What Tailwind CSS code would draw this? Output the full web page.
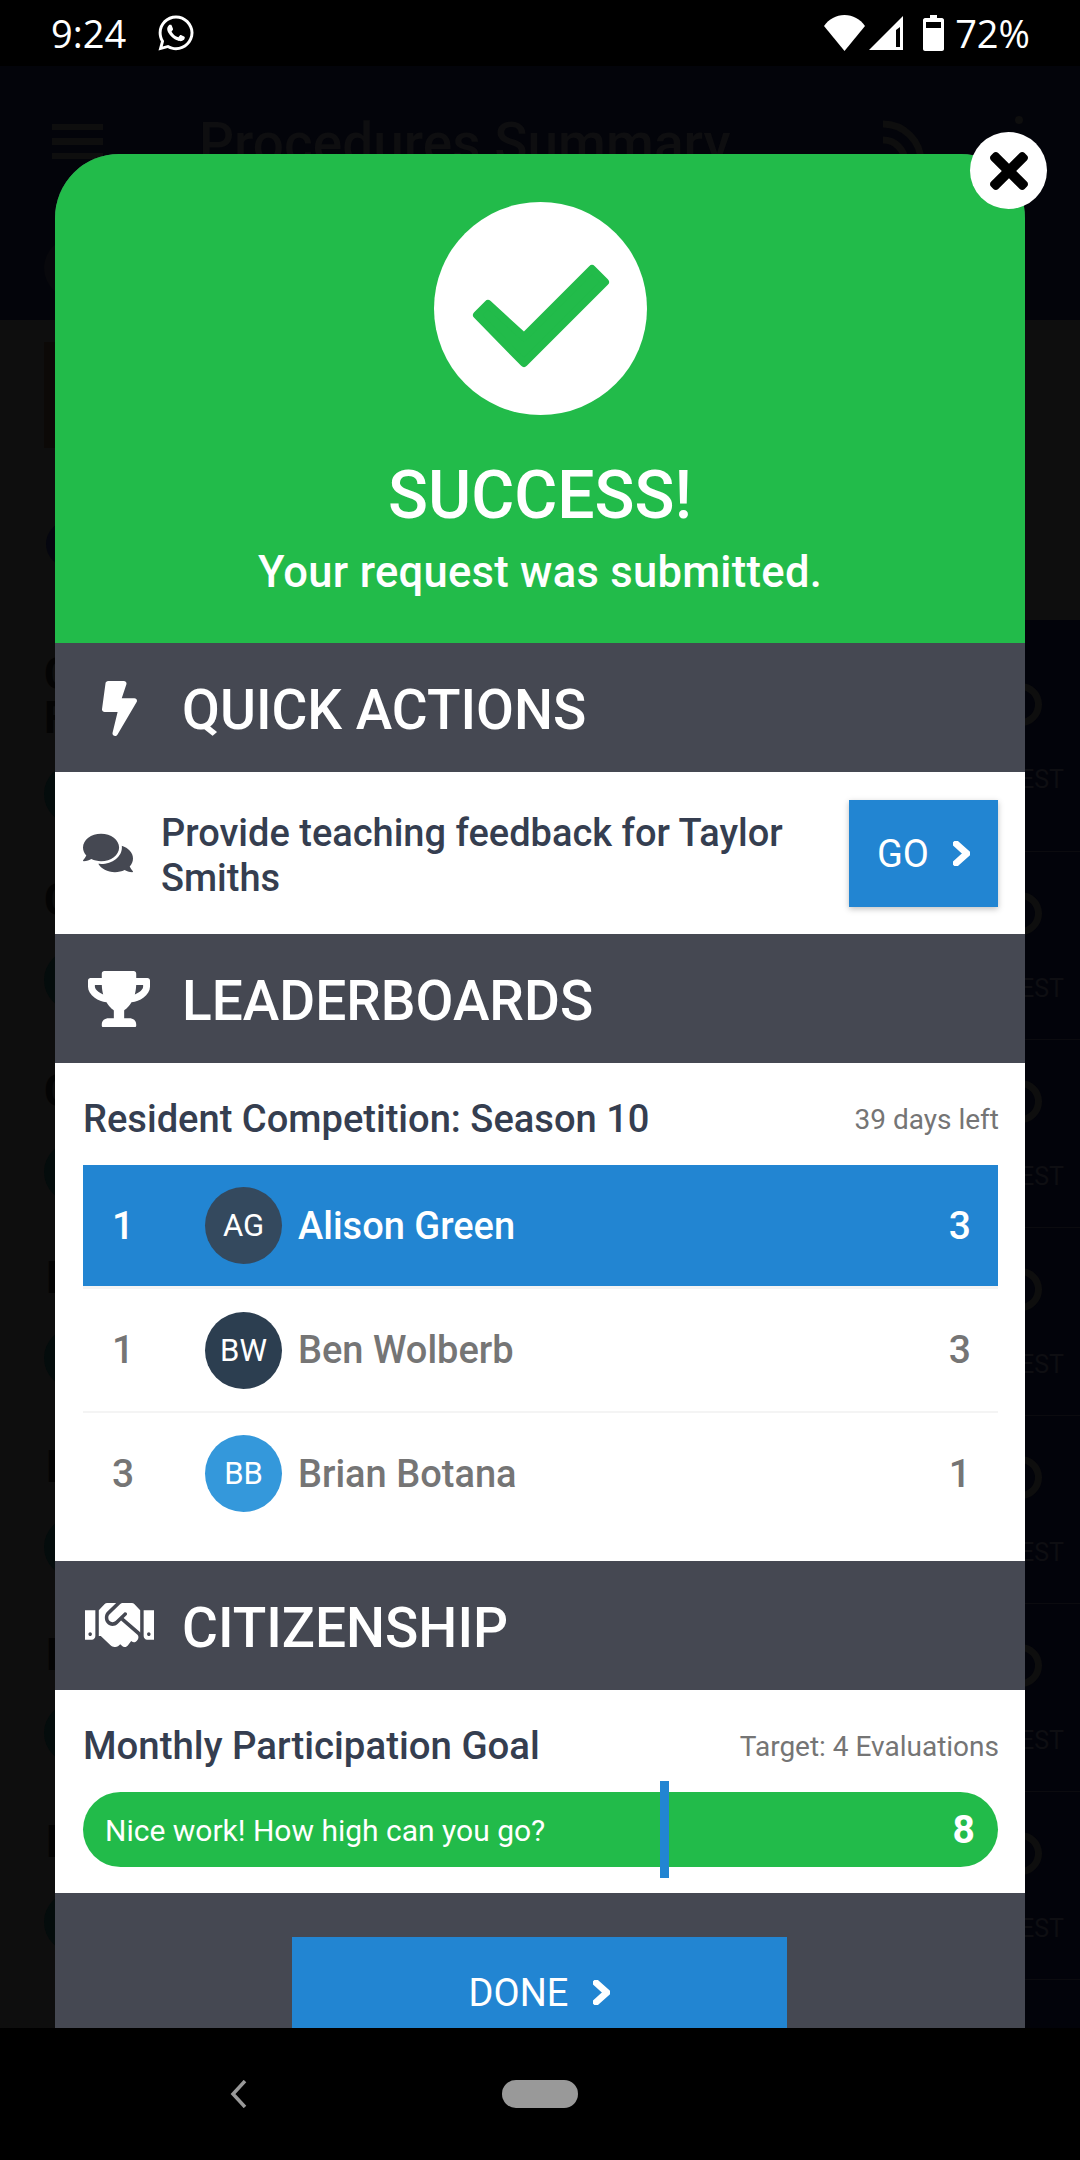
<!doctype html>
<html>
<head>
<meta charset="utf-8">
<script src="https://cdn.jsdelivr.net/npm/@tailwindcss/browser@4"></script>
</head>
<body class="bg-black">
<div class="w-[1080px] h-[2160px] flex flex-col bg-black font-['Roboto',sans-serif] overflow-hidden">

  <!-- status bar -->
  <div class="h-[66px] flex items-center pl-[51px] pr-[50px] text-white shrink-0">
    <span class="text-[38px] font-medium font-['Open_Sans',sans-serif] leading-none w-[106px]">9:24</span>
    <svg class="w-[38px] h-[40px]" viewBox="0 0 448 512" fill="currentColor"><path d="M380.9 97.1C339 55.1 283.2 32 223.9 32c-122.4 0-222 99.6-222 222 0 39.1 10.2 77.3 29.6 111L0 480l117.7-30.9c32.4 17.7 68.9 27 106.1 27h.1c122.3 0 224.1-99.6 224.1-222 0-59.3-25.2-115-67.1-157zm-157 341.6c-33.2 0-65.7-8.9-94-25.7l-6.7-4-69.8 18.3L72 359.2l-4.4-7c-18.5-29.4-28.2-63.3-28.2-98.2 0-101.7 82.8-184.5 184.6-184.5 49.3 0 95.6 19.2 130.4 54.1 34.8 34.9 56.2 81.2 56.1 130.5 0 101.8-84.9 184.6-186.6 184.6zm101.2-138.2c-5.5-2.8-32.8-16.2-37.9-18-5.1-1.9-8.8-2.8-12.5 2.8-3.7 5.6-14.3 18-17.6 21.8-3.2 3.7-6.5 4.2-12 1.4-32.6-16.3-54-29.1-75.5-66-5.7-9.8 5.7-9.1 16.3-30.3 1.8-3.7.9-6.9-.5-9.7-1.4-2.8-12.5-30.1-17.1-41.2-4.5-10.8-9.1-9.3-12.5-9.5-3.2-.2-6.9-.2-10.6-.2-3.7 0-9.7 1.4-14.8 6.9-5.1 5.6-19.4 19-19.4 46.3 0 27.3 19.9 53.7 22.6 57.4 2.8 3.7 39.1 59.7 94.8 83.8 35.2 15.2 49 16.5 66.6 13.9 10.7-1.6 32.8-13.4 37.4-26.4 4.6-13 4.6-24.1 3.2-26.4-1.3-2.5-5-3.9-10.5-6.6z"/></svg>
    <div class="flex-1"></div>
    <svg class="w-[41px] h-[36px] mt-[-1px]" viewBox="0 0 41 36" fill="currentColor"><path d="M0 11C5 4 12 0 20.5 0S36 4 41 11L20.5 36Z"/></svg>
    <svg class="w-[34px] h-[34px] ml-[4px]" viewBox="0 0 34 34" fill="currentColor"><path fill-rule="evenodd" d="M34 0V34H0ZM31 11L27 14V31H31Z"/></svg>
    <svg class="w-[21px] h-[36px] ml-[20px]" viewBox="0 0 21 36" fill="currentColor"><path fill-rule="evenodd" d="M7 0H14V3H19C20 3 21 4 21 5V34C21 35 20 36 19 36H2C1 36 0 35 0 34V5C0 4 1 3 2 3H7ZM3 7V13H18V7Z"/></svg>
    <span class="text-[38px] font-medium font-['Open_Sans',sans-serif] leading-none ml-[11px]">72%</span>
  </div>

  <!-- content behind and modal -->
  <div class="relative flex-1 min-h-0 flex flex-col bg-[#02030a]">
    <!-- app header -->
    <div class="h-[254px] bg-[#03040a] relative shrink-0">
      <div class="absolute left-[52px] top-[58px] w-[51px] flex flex-col gap-[8px]">
        <div class="h-[6px] bg-[#0e0e0e]"></div><div class="h-[7px] bg-[#0e0e0e]"></div><div class="h-[6px] bg-[#0e0e0e]"></div>
      </div>
      <span class="absolute left-[199px] top-[50px] text-[55px] font-medium leading-none text-[#0e0e10] whitespace-nowrap">Procedures Summary</span>
      <svg class="absolute left-[881px] top-[54px] w-[44px] h-[44px]" viewBox="0 0 44 44" fill="none" stroke="#0e0e0e" stroke-width="7"><path d="M2 4a38 38 0 0 1 38 38M2 20a22 22 0 0 1 22 22"/></svg>
      <div class="absolute left-[1015px] top-[50px] w-[8px] h-[8px] rounded-full bg-[#0e0e0e]"></div>
      <div class="absolute left-[44px] top-[172px] w-[60px] h-[60px] rounded-full bg-[#08080c]"></div>
    </div>

    <!-- left and right strips of the list -->
    <div class="flex-1 min-h-0 flex justify-between overflow-hidden">
      <div class="w-[60px] bg-[#0e0e0e] flex flex-col overflow-hidden">
        <div class="w-[56px] h-[106px] mt-[22px] ml-[44px] bg-[#0c0907] shrink-0"></div>
        <div class="w-[60px] h-[46px] mt-[73px] ml-[46px] rounded-full bg-[#05060f] shrink-0"></div>
        <span class="ml-[44px] mt-[85px] text-[44px] leading-[44px] font-bold text-[#040404] shrink-0">C<br>F</span>
        <div class="w-[60px] h-[60px] mt-[24px] ml-[44px] rounded-full bg-[#040c0c] shrink-0"></div>
        <span class="ml-[44px] mt-[54px] text-[44px] leading-[44px] font-bold text-[#040404] shrink-0">C</span>
        <div class="w-[60px] h-[60px] mt-[28px] ml-[44px] rounded-full bg-[#040c0c] shrink-0"></div>
        <span class="ml-[44px] mt-[59px] text-[44px] leading-[44px] font-bold text-[#040404] shrink-0">C</span>
        <div class="w-[60px] h-[60px] mt-[29px] ml-[44px] rounded-full bg-[#040c0c] shrink-0"></div>
        <span class="ml-[46px] mt-[54px] text-[44px] leading-[44px] font-bold text-[#040404] shrink-0">D</span>
        <div class="w-[60px] h-[60px] mt-[28px] ml-[44px] rounded-full bg-[#040c0c] shrink-0"></div>
        <span class="ml-[46px] mt-[57px] text-[44px] leading-[44px] font-bold text-[#040404] shrink-0">H</span>
        <div class="w-[60px] h-[60px] mt-[28px] ml-[44px] rounded-full bg-[#040c0c] shrink-0"></div>
        <span class="ml-[46px] mt-[56px] text-[44px] leading-[44px] font-bold text-[#040404] shrink-0">H</span>
        <div class="w-[60px] h-[60px] mt-[26px] ml-[44px] rounded-full bg-[#040c0c] shrink-0"></div>
        <span class="ml-[46px] mt-[57px] text-[44px] leading-[44px] font-bold text-[#040404] shrink-0">H</span>
        <div class="w-[60px] h-[60px] mt-[28px] ml-[44px] rounded-full bg-[#040c0c] shrink-0"></div>
      </div>
      <div class="w-[80px] flex flex-col overflow-hidden">
        <div class="h-[300px] bg-[#0e0e0e] shrink-0"></div>
        <div class="h-[232px] shrink-0 border-b-[1px] border-[#0b0b0f] pt-[63px]">
          <div class="w-[43px] h-[43px] ml-[-1px] rounded-full border-[7px] border-[#0e0e0e]"></div>
          <div class="text-[25px] leading-[24px] mt-[42px] text-right pr-[16px] text-[#0e0e12]">EST</div>
        </div>
        <div class="h-[188px] shrink-0 border-b-[1px] border-[#0b0b0f] pt-[40px]">
          <div class="w-[43px] h-[43px] ml-[-1px] rounded-full border-[7px] border-[#0e0e0e]"></div>
          <div class="text-[25px] leading-[24px] mt-[42px] text-right pr-[16px] text-[#0e0e12]">EST</div>
        </div>
        <div class="h-[188px] shrink-0 border-b-[1px] border-[#0b0b0f] pt-[40px]">
          <div class="w-[43px] h-[43px] ml-[-1px] rounded-full border-[7px] border-[#0e0e0e]"></div>
          <div class="text-[25px] leading-[24px] mt-[42px] text-right pr-[16px] text-[#0e0e12]">EST</div>
        </div>
        <div class="h-[188px] shrink-0 border-b-[1px] border-[#0b0b0f] pt-[40px]">
          <div class="w-[43px] h-[43px] ml-[-1px] rounded-full border-[7px] border-[#0e0e0e]"></div>
          <div class="text-[25px] leading-[24px] mt-[42px] text-right pr-[16px] text-[#0e0e12]">EST</div>
        </div>
        <div class="h-[188px] shrink-0 border-b-[1px] border-[#0b0b0f] pt-[40px]">
          <div class="w-[43px] h-[43px] ml-[-1px] rounded-full border-[7px] border-[#0e0e0e]"></div>
          <div class="text-[25px] leading-[24px] mt-[42px] text-right pr-[16px] text-[#0e0e12]">EST</div>
        </div>
        <div class="h-[188px] shrink-0 border-b-[1px] border-[#0b0b0f] pt-[40px]">
          <div class="w-[43px] h-[43px] ml-[-1px] rounded-full border-[7px] border-[#0e0e0e]"></div>
          <div class="text-[25px] leading-[24px] mt-[42px] text-right pr-[16px] text-[#0e0e12]">EST</div>
        </div>
        <div class="h-[188px] shrink-0 border-b-[1px] border-[#0b0b0f] pt-[40px]">
          <div class="w-[43px] h-[43px] ml-[-1px] rounded-full border-[7px] border-[#0e0e0e]"></div>
          <div class="text-[25px] leading-[24px] mt-[42px] text-right pr-[16px] text-[#0e0e12]">EST</div>
        </div>
      </div>
    </div>

    <!-- modal -->
    <div class="absolute left-[55px] top-[88px] bottom-0 w-[970px] rounded-t-[64px] overflow-hidden flex flex-col bg-[#454852]">
      <div class="h-[489px] bg-[#22bb4a] flex flex-col items-center text-white shrink-0 pt-[48px]">
        <svg class="w-[213px] h-[213px] shrink-0" viewBox="0 0 213 213"><circle cx="106.5" cy="106.5" r="106.5" fill="#fff"/><polygon points="43,113 54,102 90,135 158,67 171,80 90,161" fill="#22bb4a" stroke="#22bb4a" stroke-width="8" stroke-linejoin="round"/></svg>
        <div class="text-[66px] leading-none font-medium mt-[48px]">SUCCESS!</div>
        <div class="text-[43.5px] leading-none font-medium mt-[22px] tracking-[0.3px]">Your request was submitted.</div>
      </div>

      <div class="h-[129px] flex items-center text-white shrink-0 pl-[127px] pt-[6px] relative">
        <svg class="absolute left-[47px] top-[38px] w-[35px] h-[55px]" viewBox="0 0 320 512" preserveAspectRatio="none" fill="currentColor"><path d="M296 160H180.6l42.6-129.8C227.2 15 215.7 0 200 0H56C44 0 33.8 8.9 32.2 20.8l-32 240C-1.7 275.2 9.5 288 24 288h118.7L96.6 482.5c-3.6 15.2 8 29.5 23.3 29.5 8.4 0 16.4-4.4 20.8-12l176-304c9.3-15.9-2.2-36-20.7-36z"/></svg>
        <span class="text-[55px] font-medium leading-none">QUICK ACTIONS</span>
      </div>
      <div class="h-[162px] bg-white flex items-center pl-[28px] pr-[27px] shrink-0">
        <svg class="w-[50px] h-[44px] shrink-0" viewBox="0 0 576 512" preserveAspectRatio="none" fill="#454852"><path d="M416 192c0-88.4-93.1-160-208-160S0 103.6 0 192c0 34.3 14.1 65.9 38 92-13.4 30.2-35.5 54.2-35.8 54.5-2.2 2.3-2.8 5.7-1.5 8.7S4.8 352 8 352c36.6 0 66.9-12.3 88.7-25 32.2 15.7 70.3 25 111.3 25 114.9 0 208-71.6 208-160zm122 220c23.9-26 38-57.7 38-92 0-66.9-53.5-124.2-129.3-148.1.9 6.6 1.3 13.3 1.3 20.1 0 105.9-107.7 192-240 192-10.8 0-21.3-.8-31.7-1.9C207.8 439.6 281.8 480 368 480c41 0 79.1-9.2 111.3-25 21.8 12.7 52.1 25 88.7 25 3.2 0 6.1-1.9 7.3-4.8 1.3-2.9.7-6.3-1.5-8.7-.3-.3-22.4-24.2-35.8-54.5z"/></svg>
        <div class="ml-[28px] mt-[6px] flex-1 text-[38px] leading-[45px] font-medium text-[#353e50]">Provide teaching feedback for Taylor Smiths</div>
        <div class="w-[149px] h-[107px] bg-[#2285d2] text-white flex items-center justify-center gap-[24px] shadow-[0_2px_6px_rgba(0,0,0,0.25)] shrink-0">
          <span class="text-[38px] leading-none mt-[2px]">GO</span>
          <svg class="w-[17px] h-[25px] mt-[1px]" viewBox="24 32 270 448" preserveAspectRatio="none" fill="currentColor" stroke="currentColor" stroke-width="32" stroke-linejoin="round"><path d="M285.476 272.971L91.132 467.314c-9.373 9.373-24.569 9.373-33.941 0l-22.667-22.667c-9.357-9.357-9.375-24.522-.04-33.901L188.505 256 34.484 101.255c-9.335-9.379-9.317-24.544.04-33.901l22.667-22.667c9.373-9.373 24.569-9.373 33.941 0L285.475 239.03c9.373 9.372 9.373 24.568.001 33.941z"/></svg>
        </div>
      </div>

      <div class="h-[129px] flex items-center text-white shrink-0 pl-[127px] pt-[6px] relative">
        <svg class="absolute left-[33px] top-[37px] w-[62px] h-[56px]" viewBox="0 0 576 512" preserveAspectRatio="none" fill="currentColor"><path d="M552 64H448V24c0-13.3-10.7-24-24-24H152c-13.3 0-24 10.7-24 24v40H24C10.7 64 0 74.7 0 88v56c0 35.7 22.5 72.4 61.9 100.7 31.5 22.7 69.8 37.1 110 41.7C203.3 338.5 240 360 240 360v72h-48c-35.3 0-64 20.7-64 56v12c0 6.6 5.4 12 12 12h296c6.6 0 12-5.4 12-12v-12c0-35.3-28.7-56-64-56h-48v-72s36.7-21.5 68.1-73.6c40.3-4.6 78.7-19 110-41.7 39.3-28.3 61.9-65 61.9-100.7V88c0-13.3-10.7-24-24-24zM99.3 192.8C74.9 175.2 64 155.6 64 144v-16h64.2c1 32.6 5.8 61.2 12.8 86.2-15.1-5.2-29.2-12.4-41.7-21.4zM512 144c0 16.1-17.7 36.1-35.3 48.8-12.5 9-26.7 16.2-41.8 21.4 7-25 11.8-53.6 12.8-86.2H512v16z"/></svg>
        <span class="text-[55px] font-medium leading-none">LEADERBOARDS</span>
      </div>
      <div class="h-[498px] bg-white shrink-0 pl-[28px] pr-[27px] flex flex-col">
        <div class="h-[102px] flex items-center justify-between shrink-0 pt-[11px]">
          <span class="text-[38.1px] font-medium text-[#353e50] leading-none">Resident Competition: Season 10</span>
          <span class="text-[28px] text-[#757575] leading-none mr-[-1px]">39 days left</span>
        </div>
        <div class="h-[121px] bg-[#2285d2] flex items-center text-white shrink-0">
          <span class="w-[122px] pl-[29px] text-[39px] font-medium leading-none mt-[1px]">1</span>
          <div class="w-[77px] h-[77px] rounded-full bg-[#34495e] flex items-center justify-center text-[31px] leading-none">AG</div>
          <span class="ml-[16px] flex-1 text-[38px] font-medium leading-none">Alison Green</span>
          <span class="pr-[27px] text-[39px] font-medium leading-none mt-[1px]">3</span>
        </div>
        <div class="h-[127px] border-t-[3px] border-b-[2px] border-[#f4f4f4] flex items-center text-[#757575] shrink-0">
          <span class="w-[122px] pl-[29px] text-[39px] font-medium leading-none mt-[1px]">1</span>
          <div class="w-[77px] h-[77px] rounded-full bg-[#2c3e50] text-white flex items-center justify-center text-[31px] leading-none">BW</div>
          <span class="ml-[16px] flex-1 text-[38px] font-medium leading-none">Ben Wolberb</span>
          <span class="pr-[27px] text-[39px] font-medium leading-none mt-[1px]">3</span>
        </div>
        <div class="h-[121px] flex items-center text-[#757575] shrink-0">
          <span class="w-[122px] pl-[29px] text-[39px] font-medium leading-none mt-[1px]">3</span>
          <div class="w-[77px] h-[77px] rounded-full bg-[#3498db] text-white flex items-center justify-center text-[31px] leading-none">BB</div>
          <span class="ml-[16px] flex-1 text-[38px] font-medium leading-none">Brian Botana</span>
          <span class="pr-[27px] text-[39px] font-medium leading-none mt-[1px]">1</span>
        </div>
      </div>

      <div class="h-[129px] flex items-center text-white shrink-0 pl-[127px] pt-[5px] relative">
        <svg class="absolute left-[30px] top-[42px] w-[69px] h-[44px]" viewBox="0 64 640 384" preserveAspectRatio="none" fill="currentColor"><path d="M434.7 64h-85.9c-8 0-15.7 3-21.6 8.4l-98.3 90c-.1.1-.2.3-.3.4-16.6 15.6-16.3 40.5-2.1 56 12.7 13.9 39.4 17.6 56.1 2.7.1-.1.3-.1.4-.2l79.9-73.2c6.5-5.9 16.7-5.5 22.6 1 6 6.5 5.5 16.6-1 22.6l-26.1 23.9L504 313.8c2.9 2.4 5.5 5 7.9 7.7V128l-54.6-54.6c-5.9-6-14.1-9.4-22.6-9.4zM544 128.2v223.9c0 17.7 14.3 32 32 32h64V128.2h-96zm48 223.9c-8.8 0-16-7.2-16-16s7.2-16 16-16 16 7.2 16 16-7.2 16-16 16zM0 384h64c17.7 0 32-14.3 32-32V128.2H0V384zm48-63.9c8.8 0 16 7.2 16 16s-7.2 16-16 16-16-7.2-16-16c0-8.9 7.2-16 16-16zm435.9 18.6L334.6 217.5l-30 27.5c-29.7 27.1-75.2 24.5-101.7-4.4-26.9-29.4-24.8-74.9 4.4-101.7L289.1 64h-83.8c-8.5 0-16.6 3.4-22.6 9.4L128 128v223.9h18.3l90.5 81.9c27.4 22.3 67.7 18.1 90-9.3l.2-.2 17.9 15.5c15.9 13 39.4 10.5 52.3-5.4l31.4-38.6 5.4 4.4c13.7 11.1 33.9 9.1 45-4.7l9.5-11.7c11.2-13.8 9.1-33.9-4.6-45.1z"/></svg>
        <span class="text-[55px] font-medium leading-none">CITIZENSHIP</span>
      </div>
      <div class="h-[203px] bg-white shrink-0 pl-[28px] pr-[27px] flex flex-col">
        <div class="h-[102px] flex items-center justify-between shrink-0 pt-[11px]">
          <span class="text-[38.4px] font-medium text-[#353e50] leading-none">Monthly Participation Goal</span>
          <span class="text-[28px] text-[#757575] leading-none mr-[-1px]">Target: 4 Evaluations</span>
        </div>
        <div class="h-[75px] rounded-full bg-[#22bb4a] text-white flex items-center justify-between pl-[22px] pr-[23px] relative shrink-0">
          <span class="text-[30px] leading-none mt-[2px]">Nice work! How high can you go?</span>
          <span class="text-[39px] font-bold leading-none mt-[2px]">8</span>
          <div class="absolute left-[577px] top-[-11px] w-[9px] h-[97px] bg-[#2285d2]"></div>
        </div>
      </div>

      <div class="flex-1 flex justify-start pl-[237px] pt-[44px]">
        <div class="w-[495px] h-[120px] bg-[#2285d2] text-white flex items-start justify-center gap-[25px] pt-[37px]">
          <span class="text-[38px] leading-none">DONE</span>
          <svg class="w-[17px] h-[25px] mt-[6px]" viewBox="24 32 270 448" preserveAspectRatio="none" fill="currentColor" stroke="currentColor" stroke-width="32" stroke-linejoin="round"><path d="M285.476 272.971L91.132 467.314c-9.373 9.373-24.569 9.373-33.941 0l-22.667-22.667c-9.357-9.357-9.375-24.522-.04-33.901L188.505 256 34.484 101.255c-9.335-9.379-9.317-24.544.04-33.901l22.667-22.667c9.373-9.373 24.569-9.373 33.941 0L285.475 239.03c9.373 9.372 9.373 24.568.001 33.941z"/></svg>
        </div>
      </div>
    </div>

    <!-- close button -->
    <div class="absolute left-[970px] top-[66px] w-[77px] h-[77px] rounded-full bg-white flex items-center justify-center">
      <svg class="w-[38px] h-[38px]" viewBox="0 80 352 352" preserveAspectRatio="none" fill="#000"><path d="M242.72 256l100.07-100.07c12.28-12.28 12.28-32.19 0-44.48l-22.24-22.24c-12.28-12.28-32.19-12.28-44.48 0L176 189.28 75.93 89.21c-12.28-12.28-32.19-12.28-44.48 0L9.21 111.45c-12.28 12.28-12.28 32.19 0 44.48L109.28 256 9.21 356.07c-12.28 12.28-12.28 32.19 0 44.48l22.24 22.24c12.28 12.28 32.2 12.28 44.48 0L176 322.72l100.07 100.07c12.28 12.28 32.2 12.28 44.48 0l22.24-22.24c12.28-12.28 12.28-32.19 0-44.48L242.72 256z"/></svg>
    </div>
  </div>

  <!-- nav bar -->
  <div class="h-[132px] bg-black shrink-0 relative z-10 flex items-start pt-[52px] pl-[230px]">
    <svg class="w-[17px] h-[28px]" viewBox="0 0 17 28" fill="none" stroke="#999" stroke-width="3.5"><path d="M15 1L3 14L15 27"/></svg>
    <div class="ml-[255px] w-[76px] h-[28px] rounded-[14px] bg-[#999]"></div>
  </div>
</div>
</body>
</html>
